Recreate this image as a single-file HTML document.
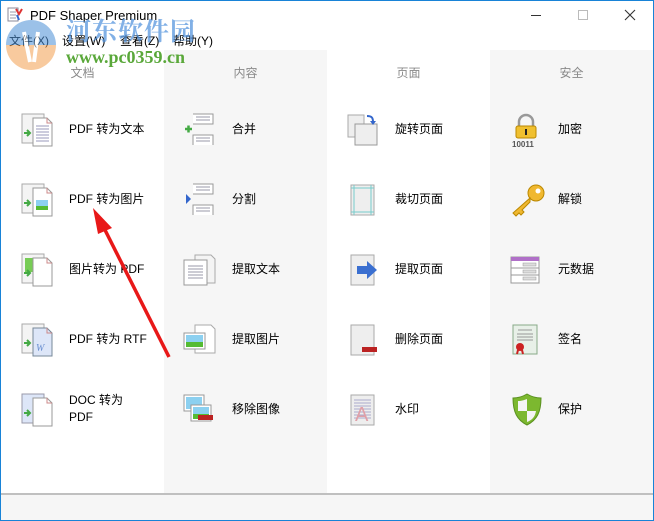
<!DOCTYPE html>
<html><head><meta charset="utf-8"><style>
*{margin:0;padding:0;box-sizing:border-box}
body{width:654px;height:521px;position:relative;overflow:hidden;background:#fff;font-family:"Liberation Sans","Noto Sans CJK SC",sans-serif;font-size:12px;color:#000}
.a{position:absolute}
.col{position:absolute;top:50px;height:443px;width:163px}
.g{background:#f6f6f6}
.hd{position:absolute;top:64px;width:163px;text-align:center;color:#8a8a8a;font-size:12px}
.t{position:absolute;font-size:12px;line-height:17px}
svg{position:absolute}
</style></head><body>
<div class="a" style="left:0;top:0;width:654px;height:521px;border:1px solid #1883d7;z-index:20;pointer-events:none"></div>
<svg style="left:7px;top:7px" width="16" height="16"><rect x="1" y="1" width="10" height="13" fill="#fff" stroke="#889"/><path d="M3 5h6M3 8h6M3 11h6" stroke="#99a"/><path d="M9 2l3 5 3-5" stroke="#d33" stroke-width="2" fill="none"/><path d="M10 8l2 5" stroke="#36c" stroke-width="2"/></svg>
<div class="t" style="left:30px;top:7px;font-size:13px">PDF Shaper Premium</div>
<div class="a" style="left:531px;top:15px;width:10px;height:1px;background:#333"></div>
<div class="a" style="left:578px;top:10px;width:10px;height:10px;border:1px solid #bbb"></div>
<svg style="left:624px;top:9px" width="12" height="12"><path d="M1 1l10 10M11 1L1 11" stroke="#333" stroke-width="1.1"/></svg>
<div class="t" style="left:9px;top:33px">文件(X)</div>
<div class="t" style="left:62px;top:33px">设置(W)</div>
<div class="t" style="left:120px;top:33px">查看(Z)</div>
<div class="t" style="left:173px;top:33px">帮助(Y)</div>
<div class="col" style="left:1px;width:163px"></div>
<div class="col g" style="left:164px"></div>
<div class="col" style="left:327px"></div>
<div class="col g" style="left:490px"></div>
<div class="hd" style="left:1px">文档</div>
<div class="hd" style="left:164px">内容</div>
<div class="hd" style="left:327px">页面</div>
<div class="hd" style="left:490px">安全</div>
<svg style="left:4px;top:20px;z-index:5;opacity:.55" width="60" height="50"><path d="M2 25a25 25 0 0 1 50 0z" fill="#4a8fd6"/><path d="M2 25a25 25 0 0 0 50 0z" fill="#f4a050"/><path d="M20 12l6 30M34 12l-4 30" stroke="#fff" stroke-width="4"/></svg>
<div class="a" style="left:66px;top:12px;font-size:25px;font-weight:bold;color:#4d90dc;opacity:.7;font-family:'Noto Serif CJK SC',serif;z-index:5;letter-spacing:1px">河东软件园</div>
<div class="a" style="left:66px;top:47px;font-size:18px;font-weight:bold;color:#5aa83a;font-family:'Liberation Serif',serif;z-index:5">www.pc0359.cn</div>
<div class="a" style="left:0;top:493px;width:654px;height:2px;background:#c0c0c0"></div>
<div class="a" style="left:0;top:495px;width:654px;height:26px;background:#f6f6f6"></div>

<svg style="left:20px;top:113px" width="36" height="34"><rect x="2" y="1" width="22" height="29" fill="#f4f4f4" stroke="#aaa"/><path d="M13 5h14l5 5v23H13z" fill="#fff" stroke="#999"/><path d="M27 5v5h5" fill="none" stroke="#c88"/><path d="M16 13h13M16 16h13M16 19h13M16 22h13M16 25h13M16 28h13" stroke="#99b"/><path d="M4 20h5M7 17l3 3-3 3" stroke="#4a4" stroke-width="2" fill="none"/></svg>
<div class="t" style="left:69px;top:121px">PDF 转为文本</div>
<svg style="left:20px;top:183px" width="36" height="34"><rect x="2" y="1" width="22" height="29" fill="#f4f4f4" stroke="#aaa"/><path d="M13 5h14l5 5v23H13z" fill="#fff" stroke="#999"/><path d="M27 5v5h5" fill="none" stroke="#c88"/><rect x="16" y="17" width="12" height="10" fill="#8cd0f0"/><rect x="16" y="23" width="12" height="4" fill="#5b3"/><path d="M4 20h5M7 17l3 3-3 3" stroke="#4a4" stroke-width="2" fill="none"/></svg>
<div class="t" style="left:69px;top:191px">PDF 转为图片</div>
<svg style="left:20px;top:253px" width="36" height="34"><rect x="2" y="1" width="22" height="29" fill="#f4f4f4" stroke="#aaa"/><rect x="5" y="5" width="10" height="14" fill="#7c5"/><path d="M13 5h14l5 5v23H13z" fill="#fff" stroke="#999"/><path d="M27 5v5h5" fill="none" stroke="#c88"/><path d="M4 20h5M7 17l3 3-3 3" stroke="#4a4" stroke-width="2" fill="none"/></svg>
<div class="t" style="left:69px;top:261px">图片转为 PDF</div>
<svg style="left:20px;top:323px" width="36" height="34"><rect x="2" y="1" width="22" height="29" fill="#f4f4f4" stroke="#aaa"/><path d="M13 5h14l5 5v23H13z" fill="#dde6f8" stroke="#789"/><path d="M27 5v5h5" fill="none" stroke="#c88"/><text x="16" y="28" font-size="10" font-style="italic" fill="#6a8fd0" font-family="Liberation Serif">W</text><path d="M4 20h5M7 17l3 3-3 3" stroke="#4a4" stroke-width="2" fill="none"/></svg>
<div class="t" style="left:69px;top:331px">PDF 转为 RTF</div>
<svg style="left:20px;top:393px" width="36" height="34"><rect x="2" y="1" width="22" height="29" fill="#dde6f8" stroke="#99a"/><path d="M13 5h14l5 5v23H13z" fill="#fff" stroke="#999"/><path d="M27 5v5h5" fill="none" stroke="#c88"/><path d="M4 20h5M7 17l3 3-3 3" stroke="#4a4" stroke-width="2" fill="none"/></svg>
<div class="t" style="left:69px;top:392px">DOC 转为<br>PDF</div>

<svg style="left:183px;top:113px" width="36" height="34"><path d="M10 1h20v10H10M10 32V22h20v10" fill="#fff" stroke="#999"/><path d="M13 4h14M13 7h14M13 25h14M13 28h14" stroke="#99a"/><path d="M2 16h7M5.5 12.5v7" stroke="#4a4" stroke-width="2.5"/></svg>
<div class="t" style="left:232px;top:121px">合并</div>
<svg style="left:183px;top:183px" width="36" height="34"><path d="M10 1h20v10H10M10 32V22h20v10" fill="#fff" stroke="#999"/><path d="M13 4h14M13 7h14M13 25h14M13 28h14" stroke="#99a"/><path d="M3 11l5 5-5 5z" fill="#36c"/></svg>
<div class="t" style="left:232px;top:191px">分割</div>
<svg style="left:183px;top:253px" width="36" height="34"><path d="M12 2h16l4 4v24H12z" fill="#f4f4f4" stroke="#aaa"/><rect x="1" y="7" width="23" height="25" fill="#fff" stroke="#999"/><path d="M5 13h15M5 16h15M5 19h15M5 22h15M5 25h15" stroke="#99a"/></svg>
<div class="t" style="left:232px;top:261px">提取文本</div>
<svg style="left:183px;top:323px" width="36" height="34"><path d="M12 2h16l4 4v24H12z" fill="#fff" stroke="#aaa"/><rect x="1" y="10" width="21" height="16" fill="#fff" stroke="#999"/><rect x="3" y="12" width="17" height="12" fill="#8cd0f0"/><rect x="3" y="19" width="17" height="5" fill="#5b3"/></svg>
<div class="t" style="left:232px;top:331px">提取图片</div>
<svg style="left:183px;top:393px" width="36" height="34"><rect x="1" y="2" width="20" height="16" fill="#fff" stroke="#999"/><rect x="3" y="4" width="16" height="12" fill="#8cd0f0"/><rect x="8" y="12" width="20" height="16" fill="#fff" stroke="#999"/><rect x="10" y="14" width="16" height="12" fill="#8cd0f0"/><rect x="10" y="21" width="16" height="5" fill="#5b3"/><rect x="15" y="22" width="15" height="5" fill="#b22"/></svg>
<div class="t" style="left:232px;top:401px">移除图像</div>

<svg style="left:347px;top:113px" width="36" height="34"><rect x="1" y="2" width="16" height="22" fill="#eee" stroke="#aaa"/><rect x="8" y="11" width="22" height="21" fill="#eee" stroke="#999"/><path d="M20 3c5 0 6 2 6 6" stroke="#36c" stroke-width="2" fill="none"/><path d="M23 8h6l-3 4z" fill="#36c"/></svg>
<div class="t" style="left:395px;top:121px">旋转页面</div>
<svg style="left:347px;top:183px" width="36" height="34"><rect x="4" y="2" width="23" height="30" fill="#eee" stroke="#aaa"/><path d="M4 5h23M4 29h23M7 2v30M24 2v30" stroke="#7cc"/></svg>
<div class="t" style="left:395px;top:191px">裁切页面</div>
<svg style="left:347px;top:253px" width="36" height="34"><rect x="4" y="2" width="23" height="30" fill="#eee" stroke="#aaa"/><path d="M10 13h10v-5l10 9-10 9v-5H10z" fill="#3a6fd0"/></svg>
<div class="t" style="left:395px;top:261px">提取页面</div>
<svg style="left:347px;top:323px" width="36" height="34"><rect x="4" y="2" width="23" height="30" fill="#eee" stroke="#aaa"/><rect x="15" y="24" width="15" height="5" fill="#b22"/></svg>
<div class="t" style="left:395px;top:331px">删除页面</div>
<svg style="left:347px;top:393px" width="36" height="34"><rect x="4" y="2" width="23" height="30" fill="#eee" stroke="#aaa"/><path d="M7 7h17M7 10h17M7 13h17M7 16h17M7 19h17M7 22h17M7 25h17" stroke="#aac"/><text x="8" y="28" font-size="20" fill="#e0a0a8" font-family="Liberation Sans">A</text></svg>
<div class="t" style="left:395px;top:401px">水印</div>

<svg style="left:510px;top:113px" width="36" height="34"><path d="M9 13V9a7 7 0 0 1 14 0v4" stroke="#999" stroke-width="2.5" fill="none"/><rect x="6" y="13" width="20" height="12" rx="2" fill="#f0c030" stroke="#b80"/><path d="M16 16v6" stroke="#222" stroke-width="2"/><text x="2" y="34" font-size="8" font-weight="bold" fill="#555">10011</text></svg>
<div class="t" style="left:558px;top:121px">加密</div>
<svg style="left:510px;top:183px" width="36" height="34"><circle cx="26" cy="10" r="8" fill="#f0b830" stroke="#b80"/><circle cx="28" cy="8" r="2.5" fill="#fff"/><path d="M20 15L3 30l3 3 3-3 2 2 3-3-2-2 8-8z" fill="#f0b830" stroke="#b80"/></svg>
<div class="t" style="left:558px;top:191px">解锁</div>
<svg style="left:510px;top:253px" width="36" height="34"><rect x="1" y="4" width="28" height="26" fill="#fff" stroke="#999"/><rect x="1" y="4" width="28" height="4" fill="#b070c8"/><path d="M1 15h28M1 22h28" stroke="#999"/><rect x="13" y="10" width="13" height="3" fill="#ddd" stroke="#999" stroke-width=".5"/><rect x="13" y="17" width="13" height="3" fill="#ddd" stroke="#999" stroke-width=".5"/><rect x="13" y="24" width="13" height="3" fill="#ddd" stroke="#999" stroke-width=".5"/></svg>
<div class="t" style="left:558px;top:261px">元数据</div>
<svg style="left:510px;top:323px" width="36" height="34"><rect x="3" y="2" width="24" height="29" fill="#e8f0e8" stroke="#8a8"/><path d="M8 7h14M7 11h16M7 14h16M7 17h16" stroke="#999"/><circle cx="10" cy="24" r="4" fill="#c22"/><path d="M8 27l-1 4M12 27l1 4" stroke="#c22" stroke-width="2"/></svg>
<div class="t" style="left:558px;top:331px">签名</div>
<svg style="left:510px;top:393px" width="36" height="34"><path d="M17 1c5 3 9 4 14 4 0 14-4 22-14 27C7 27 3 19 3 5c5 0 9-1 14-4z" fill="#7cb82f" stroke="#5a9020"/><path d="M17 6v12H8c0-5 0-8 0-10 4 0 6-1 9-2zM17 18h9c-1 6-4 9-9 11z" fill="#f4f4f4"/></svg>
<div class="t" style="left:558px;top:401px">保护</div>

<svg style="left:0;top:0;z-index:10" width="654" height="521"><path d="M104 228L169 357" stroke="#e81818" stroke-width="3.5"/><path d="M93 208l19 20-14 6z" fill="#e81818"/></svg>
</body></html>
